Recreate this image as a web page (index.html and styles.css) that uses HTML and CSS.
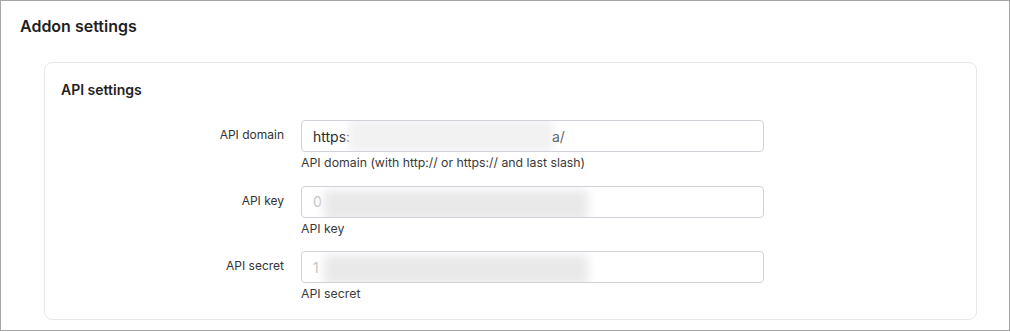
FILE: index.html
```html
<!DOCTYPE html>
<html lang="en">
<head>
    <meta charset="UTF-8">
    <title>Addon settings</title>
    <link rel="stylesheet" href="styles.css">
</head>
<body>
    <div class="frame">
        <h1 class="page-title">Addon settings</h1>

        <div class="card">
            <h2 class="card-title">API settings</h2>

            <div class="form">
                <!-- API domain -->
                <div class="form-row">
                    <label class="form-label">API domain</label>
                    <div class="form-field">
                        <div class="input">
                            <span class="input-text">https:</span>
                            <span class="blur blur-domain"></span>
                            <span class="input-tail">a/</span>
                        </div>
                        <p class="help">API domain (with http:// or https:// and last slash)</p>
                    </div>
                </div>

                <!-- API key -->
                <div class="form-row">
                    <label class="form-label">API key</label>
                    <div class="form-field">
                        <div class="input">
                            <span class="input-text faded">0</span>
                            <span class="blur blur-key"></span>
                        </div>
                        <p class="help">API key</p>
                    </div>
                </div>

                <!-- API secret -->
                <div class="form-row">
                    <label class="form-label">API secret</label>
                    <div class="form-field">
                        <div class="input">
                            <span class="input-text faded">1</span>
                            <span class="blur blur-key"></span>
                        </div>
                        <p class="help">API secret</p>
                    </div>
                </div>
            </div>
        </div>
    </div>
</body>
</html>
```

FILE: styles.css
```css
body {
    margin: 0;
    font-family: 'Inter', 'Noto Sans', sans-serif;
    background-color: #fff;
    color: #222;
}
.frame {
    width: 1010px;
    height: 331px;
    box-sizing: border-box;
    border: 1px solid #a6a6a6;
    padding: 13px 32px 0 19px;
}
.page-title {
    margin: 0;
    font-size: 16px;
    line-height: 24px;
    font-weight: 600;
    color: #1f1f1f;
}
.card {
    margin: 24px 0 0 24px;
    border: 1px solid #e6e8eb;
    border-radius: 8px;
    padding: 17px 16px 17px 16px;
}
.card-title {
    margin: 0 0 20px;
    font-size: 14px;
    line-height: 20px;
    font-weight: 600;
    color: #1f1f1f;
}
.form {
    display: flex;
    flex-direction: column;
    gap: 14.5px;
}
.form-row {
    display: flex;
    gap: 17px;
}
.form-label {
    width: 223px;
    flex-shrink: 0;
    text-align: right;
    padding-top: 7px;
    font-size: 12px;
    line-height: 16px;
    color: #333;
}
.form-field {
    width: 463px;
}
.input {
    position: relative;
    height: 32px;
    box-sizing: border-box;
    border: 1px solid #cfd3d9;
    border-radius: 4px;
    padding: 0 11px;
    display: flex;
    align-items: center;
    font-size: 14px;
    color: #2a2a2a;
    overflow: hidden;
}
.input-text.faded {
    color: #c4c4c4;
}
.input-tail {
    position: absolute;
    left: 250px;
    top: 7px;
    color: #666;
}
.blur {
    position: absolute;
    background-color: #e9e9e9;
    filter: blur(5px);
}
.blur-domain {
    left: 46px;
    top: -2px;
    width: 206px;
    height: 34px;
    background-color: #f2f2f2;
}
.blur-key {
    left: 22px;
    top: 3px;
    width: 264px;
    height: 30px;
}
.help {
    margin: 3px 0 0;
    font-size: 12.3px;
    line-height: 16px;
    color: #3a3a3a;
}
```
